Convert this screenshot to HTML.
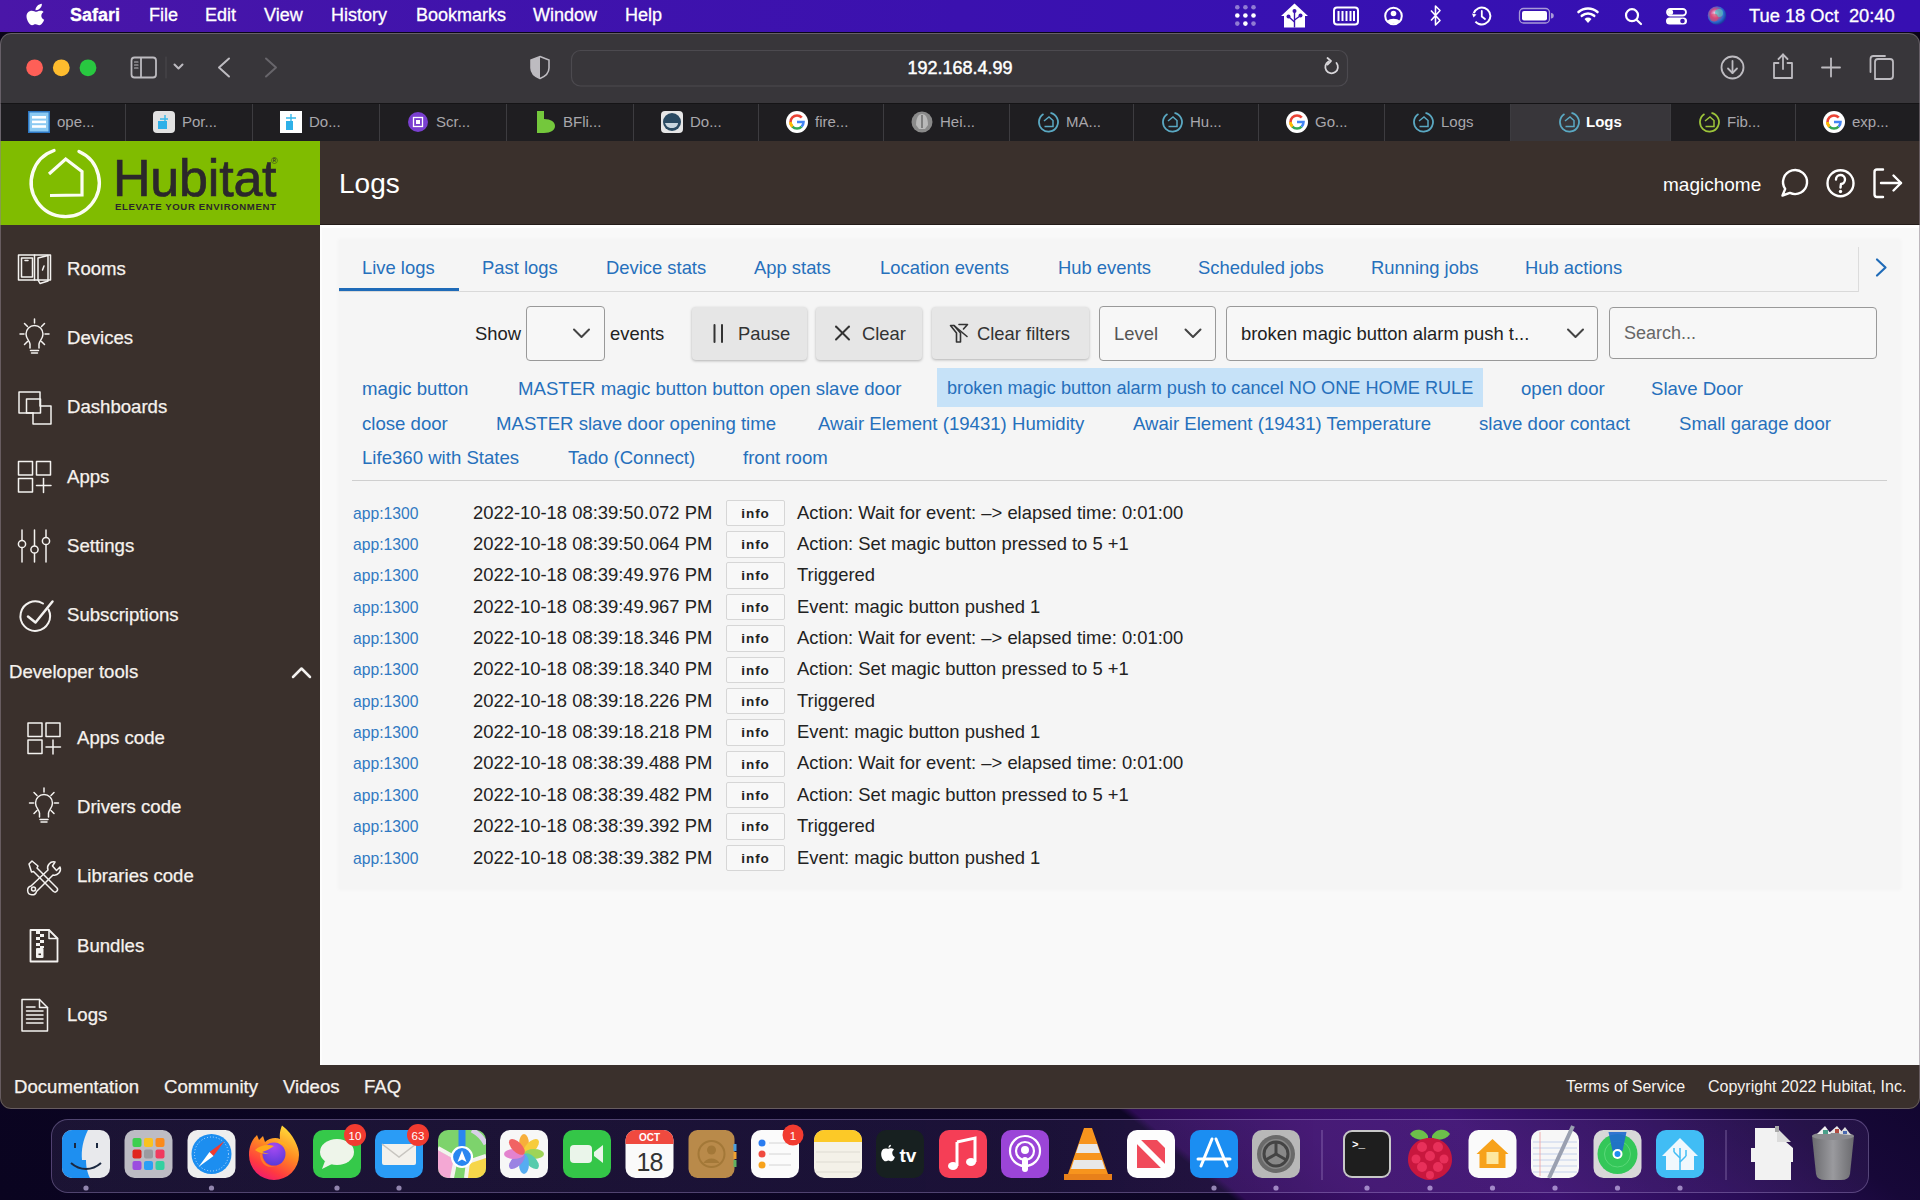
<!DOCTYPE html>
<html><head><meta charset="utf-8">
<style>
*{margin:0;padding:0;box-sizing:border-box}
html,body{width:1920px;height:1200px;overflow:hidden;font-family:"Liberation Sans",sans-serif}
body{position:relative;background:#0a0418}
.a{position:absolute;white-space:nowrap}
#menubar{left:0;top:0;width:1920px;height:32px;background:linear-gradient(90deg,#4a16a8 0%,#4013ac 25%,#3b11af 50%,#3611b2 75%,#370fb2 100%);color:#fff;font-size:18px;-webkit-text-stroke:0.3px #fff}
#menubar .a{top:5px}
#win{left:0;top:33px;width:1920px;height:1076px;border-radius:11px;overflow:hidden;background:#38363a;}
#toolbar{left:0;top:0;width:1920px;height:70px;background:#38363a}
#tabbar{left:0;top:70px;width:1920px;height:38px;background:#1f1e21;border-top:1px solid #151416}
.tab{position:absolute;top:0;height:38px;color:#a9a7ac;font-size:15px;border-left:1px solid #3d3c40}
.tab span{position:absolute;top:9.4px}
.fav{position:absolute;top:7px;width:22px;height:22px}
.tab.act{background:#38363a;color:#fff;font-weight:bold}
.side{color:#f6f2ee;font-size:18.6px;-webkit-text-stroke:0.25px #f6f2ee}
.box{border:1.3px solid #999;border-radius:4px;background:#f7f7f7}
.btn{background:#e6e6e6;border-radius:4px;box-shadow:0 1px 3px rgba(0,0,0,.28)}
.info{width:59px;height:26.5px;border:1.2px solid #d6d6d6;border-radius:2px;background:#f8f8f8;font-size:13.5px;font-weight:bold;letter-spacing:0.9px;text-align:center;line-height:25px;color:#222}
.blue{color:#2670bc}
.blue2{color:#3079c2}
</style></head><body>
<svg width="0" height="0" style="position:absolute"><defs>
<symbol id="i-list" viewBox="0 0 22 22"><rect x="0" y="0" width="22" height="22" fill="#2d78c4"/><rect x="1.5" y="1.5" width="19" height="19" fill="#8ccaf2"/><g fill="#fff"><rect x="4" y="5" width="14" height="2.6"/><rect x="4" y="9.6" width="14" height="2.6"/><rect x="4" y="14.2" width="14" height="2.6"/></g></symbol>
<symbol id="i-port" viewBox="0 0 22 22"><rect x="0" y="0" width="22" height="22" rx="4" fill="#e2e2e2"/><path d="M7,8 L15,8 M12,4 L12,18" stroke="#36b8ea" stroke-width="1.4"/><rect x="5" y="10" width="9" height="8" fill="#2eb0e8"/></symbol>
<symbol id="i-dock1" viewBox="0 0 22 22"><rect x="0" y="0" width="22" height="22" fill="#fff"/><path d="M6,7 L16,7 M11,3 L11,19" stroke="#36b8ea" stroke-width="1.4"/><rect x="6" y="10" width="7" height="9" fill="#2eb0e8"/></symbol>
<symbol id="i-scr" viewBox="0 0 22 22"><circle cx="11" cy="11" r="10" fill="#7a3fd0"/><rect x="6.5" y="6.5" width="9" height="9" fill="none" stroke="#fff" stroke-width="1.3"/><rect x="9" y="9" width="4" height="4" fill="#fff"/></symbol>
<symbol id="i-bfli" viewBox="0 0 22 22"><path d="M3,0 L10,0 L10,8 C17,8 21,11 21,15 C21,19 17,22 10,22 L3,22 Z" fill="#74c83c"/></symbol>
<symbol id="i-dock2" viewBox="0 0 22 22"><rect x="0" y="0" width="22" height="22" rx="4" fill="#e6e6e6"/><circle cx="11" cy="11" r="9" fill="#2a4a62"/><path d="M4,12 L17,12 C17,15 14,17 11,17 C7,17 5,15 4,12Z" fill="#c9d6df"/></symbol>
<symbol id="i-g" viewBox="0 0 22 22"><circle cx="11" cy="11" r="11" fill="#fff"/><path d="M11,4.5 A6.5,6.5 0 0 1 15.6,6.4" stroke="#ea4335" stroke-width="2.6" fill="none"/><path d="M15.8,6.6 L15.6,6.4 M6.4,15.6 A6.5,6.5 0 0 1 4.5,11 A6.5,6.5 0 0 1 11,4.5" stroke="#ea4335" stroke-width="2.6" fill="none"/><path d="M4.5,11 A6.5,6.5 0 0 0 6.4,15.6" stroke="#fbbc05" stroke-width="2.6" fill="none"/><path d="M6.4,15.6 A6.5,6.5 0 0 0 15.6,15.6" stroke="#34a853" stroke-width="2.6" fill="none"/><path d="M15.6,15.6 A6.5,6.5 0 0 0 17.5,11 L11,11" stroke="#4285f4" stroke-width="2.6" fill="none"/><path d="M6.4,15.6 A6.5,6.5 0 0 1 4.5,11" stroke="#fbbc05" stroke-width="2.6" fill="none"/></symbol>
<symbol id="i-helm" viewBox="0 0 22 22"><circle cx="11" cy="11" r="10.5" fill="#8a8a8a"/><path d="M5,14 C5,6 8,3 11,3 C14,3 17,6 17,14 L14,18 L8,18 Z" fill="#b9b9b9"/><path d="M11,4 L11,17" stroke="#6c6c6c" stroke-width="1.5"/></symbol>
<symbol id="i-hub" viewBox="0 0 22 22"><path d="M6.5,3 A9.5,9.5 0 1 0 13.5,1.8" fill="none" stroke="#5aa8c2" stroke-width="1.8"/><path d="M7,10 L12,6 L16,9.5 L16,15.5 L7.5,15.5" fill="none" stroke="#5aa8c2" stroke-width="1.5"/></symbol>
<symbol id="i-hubg" viewBox="0 0 22 22"><path d="M6.5,3 A9.5,9.5 0 1 0 13.5,1.8" fill="none" stroke="#9cc43a" stroke-width="1.8"/><path d="M7,10 L12,6 L16,9.5 L16,15.5 L7.5,15.5" fill="none" stroke="#9cc43a" stroke-width="1.5"/></symbol>
</defs></svg>
<div id="menubar" class="a">
  <svg class="a" style="left:0;top:0" width="1920" height="33" viewBox="0 0 1920 33">
    <g transform="translate(26.5,3.8) scale(1.05,0.93) translate(-24.5,-4.5)"><path d="M37.5,9.3 C38.6,8 39.3,6.3 39.1,4.5 C37.6,4.6 35.8,5.5 34.7,6.8 C33.7,7.9 32.9,9.7 33.1,11.4 C34.8,11.5 36.4,10.6 37.5,9.3Z M39,11.8 C36.6,11.7 35.2,13.1 34,13.1 C32.8,13.1 31.2,11.9 29.5,11.9 C27,12 24.5,14 24.5,18 C24.5,20.4 25.4,23 26.6,24.8 C27.6,26.3 28.5,27.5 29.8,27.5 C31.1,27.4 31.6,26.6 33.2,26.6 C34.8,26.6 35.2,27.5 36.6,27.5 C38,27.4 38.9,26.2 39.8,24.8 C40.9,23.2 41.3,21.7 41.3,21.6 C41.3,21.6 38.6,20.5 38.6,17.4 C38.5,14.8 40.7,13.5 40.8,13.4 C39.5,11.6 37.6,11.8 39,11.8Z" fill="#fff"/></g>
    <g fill="#fff">
      <circle cx="1237.3" cy="7.3" r="2.3" opacity=".45"/><circle cx="1245.4" cy="7.3" r="2.3" opacity=".45"/><circle cx="1253.5" cy="7.3" r="2.3" opacity=".45"/>
      <circle cx="1237.3" cy="15.5" r="2.3"/><circle cx="1245.4" cy="15.5" r="2.3"/><circle cx="1253.5" cy="15.5" r="2.3"/>
      <circle cx="1237.3" cy="23.6" r="2.3" opacity=".45"/><circle cx="1245.4" cy="23.6" r="2.3"/><circle cx="1253.5" cy="23.6" r="2.3" opacity=".45"/>
      <path d="M1294.5,3.5 L1308,16 L1305,16 L1305,27.5 L1284,27.5 L1284,16 L1281,16Z"/>
    </g>
    <g fill="none" stroke="#3d12b0" stroke-width="1.4">
      <line x1="1294.5" y1="12" x2="1294.5" y2="27.5"/>
      <path d="M1294.5,22 L1289,17 M1294.5,20 L1300,16"/>
    </g>
    <g fill="#3d12b0"><circle cx="1294.5" cy="11" r="2"/><circle cx="1288.5" cy="16.5" r="2"/><circle cx="1300.5" cy="15.5" r="2"/></g>
    <g fill="none" stroke="#fff" stroke-width="2">
      <rect x="1334" y="7.5" width="24" height="17" rx="3"/>
      <circle cx="1393.5" cy="16" r="8.3"/>
      <circle cx="1481.8" cy="16" r="8.5" stroke-dasharray="44 10" transform="rotate(200 1481.8 16)"/>
    </g>
    <g stroke="#fff" stroke-width="2"><line x1="1338.5" y1="11" x2="1338.5" y2="21"/><line x1="1342.5" y1="11" x2="1342.5" y2="21"/><line x1="1346.5" y1="11" x2="1346.5" y2="21"/><line x1="1350.5" y1="11" x2="1350.5" y2="21"/><line x1="1354" y1="11" x2="1354" y2="21"/></g>
    <circle cx="1393.5" cy="13.5" r="2.8" fill="#fff"/><path d="M1387.5,21 C1389,18 1398,18 1399.5,21 L1397,23.5 L1390,23.5Z" fill="#fff"/>
    <path d="M1431,10.5 L1440,20.5 L1435.5,25 L1435.5,6 L1440,10.5 L1431,20.5" fill="none" stroke="#fff" stroke-width="1.6" stroke-linejoin="round"/>
    <path d="M1481.8,11 L1481.8,16.5 L1485,19" fill="none" stroke="#fff" stroke-width="1.8" stroke-linecap="round"/>
    <path d="M1472,13.5 L1473.5,17.5 L1476.5,14.5Z" fill="#fff"/>
    <rect x="1519.5" y="8.5" width="30" height="14.5" rx="4" fill="none" stroke="#a99ad8" stroke-width="1.3"/>
    <rect x="1522" y="11" width="25" height="9.5" rx="2" fill="#fff"/>
    <path d="M1551,13 A2.5,2.5 0 0 1 1551,18.5Z" fill="#a99ad8"/>
    <g fill="none" stroke="#fff" stroke-width="2.6" stroke-linecap="round">
      <path d="M1578.5,12 A14.5,14.5 0 0 1 1597.5,12"/>
      <path d="M1581.8,15.8 A9.5,9.5 0 0 1 1594.2,15.8"/>
    </g>
    <path d="M1584.5,19 A5,5 0 0 1 1591.5,19 L1588,23Z" fill="#fff"/>
    <g fill="none" stroke="#fff" stroke-width="2.2" stroke-linecap="round">
      <circle cx="1632" cy="15.2" r="6"/><line x1="1636.5" y1="19.7" x2="1641" y2="24"/>
    </g>
    <g fill="none" stroke="#fff" stroke-width="1.8"><rect x="1667" y="9" width="19" height="6.5" rx="3.25"/></g>
    <rect x="1666" y="17.5" width="21" height="7" rx="3.5" fill="#fff"/>
    <circle cx="1670.5" cy="12.2" r="2.6" fill="#fff"/>
    <circle cx="1682.5" cy="21" r="2.3" fill="#3d12b0"/>
    <defs><radialGradient id="siri" cx="40%" cy="40%" r="60%"><stop offset="0" stop-color="#f0f0ff"/><stop offset=".4" stop-color="#d04a8a"/><stop offset=".75" stop-color="#2a6ad0"/><stop offset="1" stop-color="#1a3aa0"/></radialGradient></defs>
    <circle cx="1717" cy="15.5" r="9.3" fill="url(#siri)"/>
    <circle cx="1719" cy="13" r="4" fill="#45c8c8" opacity=".7"/>
    <circle cx="1714" cy="17.5" r="4" fill="#e04a6a" opacity=".6"/>
  </svg>
  <div class="a" style="left:70px;font-weight:bold">Safari</div>
  <div class="a" style="left:149px">File</div>
  <div class="a" style="left:205px">Edit</div>
  <div class="a" style="left:264px">View</div>
  <div class="a" style="left:331px">History</div>
  <div class="a" style="left:416px">Bookmarks</div>
  <div class="a" style="left:533px">Window</div>
  <div class="a" style="left:625px">Help</div>
  <div class="a" style="left:1749px;font-size:18.3px">Tue 18 Oct&nbsp; 20:40</div>
</div>
  <!--DOCK-->
  <div class="a" style="left:0;top:1100px;width:1920px;height:100px;background:linear-gradient(38deg,#0a0420 0%,#0e0626 60.3%,#2e0c55 60.9%,#3a1068 68%,#3c1270 76%,#2a0d58 85%,#170838 93%,#120630 100%)"></div>
  <div class="a" style="left:51px;top:1119px;width:1818px;height:74px;border-radius:17px;background:linear-gradient(90deg,rgba(60,50,90,.35) 0%,rgba(60,45,100,.3) 55%,rgba(110,60,160,.25) 70%,rgba(80,50,120,.25) 100%);border:1.2px solid rgba(180,160,220,.35)"></div>
  <svg class="a" style="left:0;top:1100px" width="1920" height="100" viewBox="0 1100 1920 100">
    <line x1="1322" y1="1130" x2="1322" y2="1180" stroke="rgba(200,180,230,.45)" stroke-width="1"/>
    <line x1="1726" y1="1130" x2="1726" y2="1180" stroke="rgba(200,180,230,.45)" stroke-width="1"/>
    <g transform="translate(86,1154)"><rect x="-24" y="-24" width="48" height="48" rx="10" fill="#e8e9ec"/><path d="M-14,-24 L2,-24 C-3,-14 -5,-4 -4,6 L0,6 C0,14 2,20 4,24 L-14,24 A10,10 0 0 1 -24,14 L-24,-14 A10,10 0 0 1 -14,-24Z" fill="#1e8ff0"/><path d="M-15,9 C-6,17 6,17 15,9" fill="none" stroke="#1b2840" stroke-width="2"/><rect x="-12" y="-11" width="2" height="5" fill="#1b2840"/><rect x="10" y="-11" width="2" height="5" fill="#1b2840"/></g><g transform="translate(148.5,1154)"><rect x="-24" y="-24" width="48" height="48" rx="10" fill="#bdbcc4"/><g><rect x="-16" y="-16" width="9" height="9" rx="2" fill="#3ccf4e"/><rect x="-4.5" y="-16" width="9" height="9" rx="2" fill="#f9c220"/><rect x="7" y="-16" width="9" height="9" rx="2" fill="#fb8a1b"/><rect x="-16" y="-4.5" width="9" height="9" rx="2" fill="#e0261e"/><rect x="-4.5" y="-4.5" width="9" height="9" rx="2" fill="#9a9aa0"/><rect x="7" y="-4.5" width="9" height="9" rx="2" fill="#f03a5f"/><rect x="-16" y="7" width="9" height="9" rx="2" fill="#9b4de0"/><rect x="-4.5" y="7" width="9" height="9" rx="2" fill="#2a9ff5"/><rect x="7" y="7" width="9" height="9" rx="2" fill="#34d0a0"/></g></g><g transform="translate(211.5,1154)"><rect x="-24" y="-24" width="48" height="48" rx="10" fill="#eeeeee"/><circle cx="0" cy="0" r="20" fill="#1c8ef0"/><circle cx="0" cy="0" r="17" fill="none" stroke="#bfe0ff" stroke-width="1" stroke-dasharray="1 2"/><path d="M13,-13 L2,2 L-2,-2Z" fill="#f03b30"/><path d="M-13,13 L2,2 L-2,-2Z" fill="#fff"/></g><g transform="translate(274,1154)"><defs><linearGradient id="ffg" x1=".8" y1="0" x2=".3" y2="1"><stop offset="0" stop-color="#ffe23a"/><stop offset=".45" stop-color="#ff8a22"/><stop offset=".8" stop-color="#ff3a40"/><stop offset="1" stop-color="#f01a70"/></linearGradient><radialGradient id="ffp" cx=".5" cy=".2" r=".8"><stop offset="0" stop-color="#a64af2"/><stop offset="1" stop-color="#5a3ad8"/></radialGradient></defs><path d="M-25,1 C-25,-9 -21,-15 -17,-19 L-15,-14 L-11,-18 L-9,-12 C-5,-16 2,-17 6,-15 C5,-21 7,-26 8,-28.5 C14,-24 18,-19 21,-13 C24,-7 25,-3 25,1 A25,25 0 0 1 -25,1Z" fill="url(#ffg)"/><circle cx="0" cy="0" r="11.5" fill="url(#ffp)"/><path d="M-19,-4 C-14,-9 -6,-10 0,-8 C-4,-5 -8,-3 -12,-2 C-10,-1 -7,-1 -5,0 C-10,0 -15,-1 -19,-4Z" fill="#ffa81a"/><path d="M-12,-1 C-12,8 -6,13 1,12 C-6,15 -14,10 -14,0Z" fill="#ff7a2a"/><path d="M4,-13 C10,-13 14,-9 15,-5 C12,-9 8,-11 4,-11Z" fill="#ffb020"/></g><g transform="translate(337,1154)"><rect x="-24" y="-24" width="48" height="48" rx="10" fill="#35c94a"/><ellipse cx="0" cy="-2" rx="17" ry="13" fill="#eef5ea"/><path d="M-12,7 L-15,15 L-5,10Z" fill="#eef5ea"/></g><g transform="translate(399,1154)"><rect x="-24" y="-24" width="48" height="48" rx="10" fill="#2a9cf6"/><rect x="-17" y="-10" width="34" height="21" rx="2" fill="#f3f1ec"/><path d="M-17,-10 L0,3 L17,-10" fill="none" stroke="#c8c5c0" stroke-width="1.5"/></g><g transform="translate(462,1154)"><defs><clipPath id="mclip"><rect x="-24" y="-24" width="48" height="48" rx="10"/></clipPath></defs><g clip-path="url(#mclip)"><rect x="-24" y="-24" width="48" height="48" fill="#7dd36c"/><path d="M10,-24 A34,34 0 0 1 24,-10" fill="none" stroke="#d8d0e8" stroke-width="5"/><path d="M-24,-4 L-6,6 L-10,24 L-24,24Z" fill="#f4a8d4"/><path d="M6,8 L24,4 L24,24 L4,24Z" fill="#f6d64a"/><path d="M-24,-6 L-6,4 L-10,24 M-6,4 L6,8 L24,2 M6,8 L4,24" fill="none" stroke="#f4f2ee" stroke-width="4"/><rect x="-3.5" y="-24" width="7" height="26" fill="#2a86f0"/><circle cx="0" cy="3" r="10" fill="#2a86f0" stroke="#fff" stroke-width="2.2"/><path d="M0,-3.5 L4.5,8 L0,5.5 L-4.5,8Z" fill="#fff"/></g></g><g transform="translate(524,1154)"><rect x="-24" y="-24" width="48" height="48" rx="10" fill="#f7f7f7"/><g opacity="0.85"><ellipse cx="0" cy="-10" rx="5" ry="10" fill="#f7a21b"/><ellipse cx="0" cy="-10" rx="5" ry="10" fill="#f7c51b" transform="rotate(45)"/><ellipse cx="0" cy="-10" rx="5" ry="10" fill="#8fcf3c" transform="rotate(90)"/><ellipse cx="0" cy="-10" rx="5" ry="10" fill="#3cc4a0" transform="rotate(135)"/><ellipse cx="0" cy="-10" rx="5" ry="10" fill="#3a9ff0" transform="rotate(180)"/><ellipse cx="0" cy="-10" rx="5" ry="10" fill="#8a6ee0" transform="rotate(225)"/><ellipse cx="0" cy="-10" rx="5" ry="10" fill="#e06ec8" transform="rotate(270)"/><ellipse cx="0" cy="-10" rx="5" ry="10" fill="#f04a4a" transform="rotate(315)"/></g></g><g transform="translate(587,1154)"><rect x="-24" y="-24" width="48" height="48" rx="10" fill="#34c648"/><rect x="-17" y="-9" width="22" height="18" rx="4" fill="#eaf5ea"/><path d="M7,-2 L16,-9 L16,9 L7,2Z" fill="#eaf5ea"/></g><g transform="translate(649.5,1154)"><rect x="-24" y="-24" width="48" height="48" rx="10" fill="#fafafa"/><path d="M-24,-14 A10,10 0 0 1 -14,-24 L14,-24 A10,10 0 0 1 24,-14 L24,-10 L-24,-10Z" fill="#f04a3f"/><text x="0" y="-13.5" text-anchor="middle" font-family="Liberation Sans" font-weight="bold" font-size="10" fill="#fff">OCT</text><text x="0" y="17" text-anchor="middle" font-family="Liberation Sans" font-size="25" fill="#333" letter-spacing="-1">18</text></g><g transform="translate(712.5,1154)"><rect x="-24" y="-24" width="46" height="48" rx="9" fill="#b98a4a"/><rect x="21" y="-10" width="3" height="7" fill="#4aa0e0"/><rect x="21" y="-2" width="3" height="7" fill="#f0a030"/><rect x="21" y="6" width="3" height="7" fill="#60b060"/><circle cx="-1" cy="0" r="13" fill="none" stroke="#a37838" stroke-width="2"/><circle cx="-1" cy="-4" r="4.5" fill="#a37838"/><path d="M-9,9 C-6,3 4,3 7,9Z" fill="#a37838"/></g><g transform="translate(775,1154)"><rect x="-24" y="-24" width="48" height="48" rx="10" fill="#fbfbfb"/><circle cx="-13" cy="-11" r="3.5" fill="#2a7cf0"/><circle cx="-13" cy="0" r="3.5" fill="#f04a3f"/><circle cx="-13" cy="11" r="3.5" fill="#f7a21b"/><g stroke="#d4d4d4" stroke-width="1"><line x1="-6" y1="-11" x2="16" y2="-11"/><line x1="-6" y1="0" x2="16" y2="0"/><line x1="-6" y1="11" x2="16" y2="11"/></g></g><g transform="translate(838,1154)"><rect x="-24" y="-24" width="48" height="48" rx="10" fill="#f4f1e8"/><path d="M-24,-14 A10,10 0 0 1 -14,-24 L14,-24 A10,10 0 0 1 24,-14 L24,-12 L-24,-12Z" fill="#fcc927"/><g stroke="#dedbd2" stroke-width="1"><line x1="-22" y1="-2" x2="22" y2="-2"/><line x1="-22" y1="8" x2="22" y2="8"/><line x1="-22" y1="18" x2="22" y2="18"/></g></g><g transform="translate(900,1154)"><rect x="-24" y="-24" width="48" height="48" rx="10" fill="#172020"/><g transform="translate(-12,0.5) scale(0.85) translate(10,-1)"><path d="M-13,-6 C-17,-6 -18,-2 -18,1 C-18,5 -15,9 -13,9 C-11.5,9 -11,8 -9.5,8 C-8,8 -7.5,9 -6,9 C-4,9 -2,5 -2,4 C-4,3 -5,1 -5,-1 C-5,-3 -4,-4 -3,-5 C-4,-6.5 -6,-6.5 -7,-6.5 C-8.5,-6.5 -9,-5.8 -10,-5.8 C-11,-5.8 -11.5,-6 -13,-6Z M-9.5,-7 C-9.5,-9 -8,-10.5 -6.5,-10.5 C-6.5,-8.5 -8,-7 -9.5,-7Z" fill="#fff"/></g><text x="8" y="7.5" text-anchor="middle" font-family="Liberation Sans" font-weight="bold" font-size="19" fill="#fff">tv</text></g><g transform="translate(963,1154)"><rect x="-24" y="-24" width="48" height="48" rx="10" fill="#f53e56"/><path d="M-6,-12 L12,-16 L12,8" fill="none" stroke="#fff" stroke-width="3"/><line x1="-6" y1="-12" x2="-6" y2="12" stroke="#fff" stroke-width="3"/><ellipse cx="-10" cy="12" rx="5" ry="4" fill="#fff"/><ellipse cx="8" cy="8" rx="5" ry="4" fill="#fff"/></g><g transform="translate(1025,1154)"><rect x="-24" y="-24" width="48" height="48" rx="10" fill="#9b45d8"/><circle cx="0" cy="-3" r="15" fill="none" stroke="#fff" stroke-width="2.2"/><circle cx="0" cy="-3" r="9" fill="none" stroke="#fff" stroke-width="2.2"/><circle cx="0" cy="-4" r="4" fill="#fff"/><rect x="-3" y="3" width="6" height="15" rx="3" fill="#fff"/></g><g transform="translate(1088,1154)"><path d="M-4,-26 L4,-26 L20,20 L24,26 L-24,26 L-20,20Z" fill="#f7941d"/><path d="M-9,-10 L9,-10 L12,-1 L-12,-1Z" fill="#e8e8e8"/><path d="M-14,6 L14,6 L17,15 L-17,15Z" fill="#e8e8e8"/><path d="M-24,20 L24,20 L24,26 L-24,26Z" fill="#e8801a"/></g><g transform="translate(1151,1154)"><rect x="-24" y="-24" width="48" height="48" rx="10" fill="#fdfdfd"/><path d="M-14,-14 L6,-14 L14,-6 L14,14 L-6,14 L-14,6Z" fill="#f04a5a"/><path d="M-14,-14 L14,14" stroke="#fff" stroke-width="6"/><path d="M-14,-8 L-14,14 L8,14Z" fill="#f04a5a"/></g><g transform="translate(1214,1154)"><rect x="-24" y="-24" width="48" height="48" rx="10" fill="#1b8ef2"/><g stroke="#fff" stroke-width="3" stroke-linecap="round"><line x1="-2" y1="-15" x2="-13" y2="12"/><line x1="2" y1="-15" x2="13" y2="12"/><line x1="-16" y1="5" x2="16" y2="5"/></g></g><g transform="translate(1276,1154)"><rect x="-24" y="-24" width="48" height="48" rx="10" fill="#b8b8b8"/><circle cx="0" cy="0" r="19" fill="#6a6a6a"/><circle cx="0" cy="0" r="15" fill="#888"/><circle cx="0" cy="0" r="12" fill="none" stroke="#444" stroke-width="3"/><g stroke="#444" stroke-width="3"><line x1="0" y1="0" x2="0" y2="-12"/><line x1="0" y1="0" x2="10.4" y2="6"/><line x1="0" y1="0" x2="-10.4" y2="6"/></g></g><g transform="translate(1367,1154)"><rect x="-24" y="-24" width="48" height="48" rx="9" fill="#c8c8c8"/><rect x="-22" y="-22" width="44" height="44" rx="7" fill="#1e1e1e"/><text x="-15" y="-6" font-family="Liberation Mono" font-weight="bold" font-size="11" fill="#fff">&gt;_</text></g><g transform="translate(1430,1154)"><path d="M-2,-18 C-6,-26 -16,-26 -20,-20 C-16,-14 -8,-13 -2,-16Z" fill="#6cc04a"/><path d="M2,-18 C6,-26 16,-26 20,-20 C16,-14 8,-13 2,-16Z" fill="#6cc04a"/><path d="M0,-16 C-14,-16 -22,-6 -22,6 C-22,18 -10,26 0,26 C10,26 22,18 22,6 C22,-6 14,-16 0,-16Z" fill="#c8173e"/><g fill="#e8305a"><circle cx="-8" cy="-7" r="5"/><circle cx="8" cy="-7" r="5"/><circle cx="0" cy="2" r="5"/><circle cx="-14" cy="5" r="4.5"/><circle cx="14" cy="5" r="4.5"/><circle cx="-8" cy="13" r="5"/><circle cx="8" cy="13" r="5"/><circle cx="0" cy="21" r="4"/></g></g><g transform="translate(1492.5,1154)"><rect x="-24" y="-24" width="48" height="48" rx="10" fill="#fafafa"/><path d="M-16,0 L0,-15 L16,0 L13,0 L13,14 L-13,14 L-13,0Z" fill="#f7a21b"/><rect x="-6" y="-2" width="12" height="12" fill="#fde7a0"/></g><g transform="translate(1555,1154)"><rect x="-24" y="-24" width="48" height="48" rx="10" fill="#f7f7f7"/><g stroke="#b8c8e8" stroke-width="0.8"><line x1="-22" y1="-12" x2="22" y2="-12"/><line x1="-22" y1="-6" x2="22" y2="-6"/><line x1="-22" y1="0" x2="22" y2="0"/><line x1="-22" y1="6" x2="22" y2="6"/><line x1="-22" y1="12" x2="22" y2="12"/><line x1="-22" y1="18" x2="22" y2="18"/></g><line x1="-15" y1="-22" x2="-15" y2="22" stroke="#f0a0a0" stroke-width="0.8"/><line x1="18" y1="-28" x2="-6" y2="24" stroke="#9aa0b0" stroke-width="4"/></g><g transform="translate(1617.5,1154)"><rect x="-24" y="-24" width="48" height="48" rx="10" fill="#d8d8d8"/><circle cx="0" cy="0" r="20" fill="#34c759"/><circle cx="0" cy="0" r="13" fill="none" stroke="#5ad878" stroke-width="1"/><path d="M-9,-22 L9,-22 L5,-3 L-5,-3Z" fill="#1e6ad0" opacity="0.9"/><circle cx="0" cy="0" r="5" fill="#fff"/><circle cx="0" cy="0" r="3" fill="#1e8ef0"/></g><g transform="translate(1680,1154)"><rect x="-24" y="-24" width="48" height="48" rx="10" fill="#41bdf5"/><path d="M-18,2 L0,-16 L18,2 L14,2 L14,16 L-14,16 L-14,2Z" fill="#f0f8fd"/><g stroke="#41bdf5" stroke-width="1.5" fill="none"><line x1="0" y1="-6" x2="0" y2="16"/><path d="M0,4 L-6,-2 M0,8 L6,2 M-6,-2 L-6,-6 M6,2 L6,-4"/></g></g><g transform="translate(1771,1154)"><path d="M-16,-26 L6,-26 L6,-20 L22,-6 L22,8 L20,8 L20,26 L-16,26 L-16,8 L-20,8 L-20,-6 L-16,-6Z" fill="#f2f2f2"/><path d="M6,-26 L6,-12 L20,-12" fill="#dcdcdc"/><rect x="4" y="-28" width="4" height="6" fill="#aaa"/></g><g transform="translate(1833,1154)"><defs><linearGradient id="trg" x1="0" y1="0" x2="1" y2="0"><stop offset="0" stop-color="#6a6a6e"/><stop offset=".5" stop-color="#9a9a9e"/><stop offset="1" stop-color="#6a6a6e"/></linearGradient></defs><path d="M-21,-18 L21,-18 L17,20 Q16,26 8,26 L-8,26 Q-16,26 -17,20Z" fill="url(#trg)"/><ellipse cx="0" cy="-18" rx="21" ry="4" fill="#8a8a8e"/><g><path d="M-16,-20 L-8,-28 L-2,-20Z" fill="#f0f0f0"/><path d="M-4,-21 L4,-28 L10,-21Z" fill="#e8e8e8"/><path d="M6,-20 L12,-27 L18,-19Z" fill="#dcdcdc"/><rect x="-10" y="-24" width="5" height="4" fill="#4aa08a"/><rect x="2" y="-25" width="4" height="4" fill="#b04a40"/><rect x="10" y="-23" width="4" height="3" fill="#4a6ab0"/></g></g>
    <circle cx="86" cy="1188" r="2.6" fill="rgba(225,210,255,0.6)"/><circle cx="211.5" cy="1188" r="2.6" fill="rgba(225,210,255,0.6)"/><circle cx="337" cy="1188" r="2.6" fill="rgba(225,210,255,0.6)"/><circle cx="399" cy="1188" r="2.6" fill="rgba(225,210,255,0.6)"/><circle cx="1214" cy="1188" r="2.6" fill="rgba(225,210,255,0.6)"/><circle cx="1276" cy="1188" r="2.6" fill="rgba(225,210,255,0.6)"/><circle cx="1367" cy="1188" r="2.6" fill="rgba(225,210,255,0.6)"/><circle cx="1430" cy="1188" r="2.6" fill="rgba(225,210,255,0.6)"/><circle cx="1492.5" cy="1188" r="2.6" fill="rgba(225,210,255,0.6)"/><circle cx="1555" cy="1188" r="2.6" fill="rgba(225,210,255,0.6)"/><circle cx="1617.5" cy="1188" r="2.6" fill="rgba(225,210,255,0.6)"/><circle cx="1680" cy="1188" r="2.6" fill="rgba(225,210,255,0.6)"/>
    <g font-family="Liberation Sans" font-size="11.5" fill="#fff" text-anchor="middle"><circle cx="355" cy="1135" r="11" fill="#f23b30"/><text x="355" y="1139.5">10</text><circle cx="418" cy="1135" r="11" fill="#f23b30"/><text x="418" y="1139.5">63</text><circle cx="793" cy="1135" r="10.5" fill="#f23b30"/><text x="793" y="1139.5">1</text></g>
  </svg>
<div id="win" class="a">
  <div id="toolbar" class="a">
    <svg class="a" style="left:0;top:0" width="1920" height="70" viewBox="0 33 1920 70">
      <circle cx="34.6" cy="67.8" r="8.4" fill="#fe5f57"/>
      <circle cx="61.3" cy="67.8" r="8.4" fill="#febc2e"/>
      <circle cx="88" cy="67.8" r="8.4" fill="#28c840"/>
      <g fill="none" stroke="#bdbbc0" stroke-width="1.8" stroke-linecap="round" stroke-linejoin="round">
        <rect x="131.5" y="57.5" width="24.5" height="20" rx="3"/>
        <line x1="141" y1="58" x2="141" y2="77"/>
        <line x1="134.5" y1="62" x2="138" y2="62" stroke-width="1.2"/>
        <line x1="134.5" y1="65" x2="138" y2="65" stroke-width="1.2"/>
        <line x1="134.5" y1="68" x2="138" y2="68" stroke-width="1.2"/>
        <line x1="166" y1="57" x2="166" y2="78" stroke="#4a484d" stroke-width="1"/>
        <polyline points="174.5,64.5 178.5,68.5 182.5,64.5" stroke-width="2"/>
        <polyline points="229,58.5 219,67.5 229,76.5" stroke-width="2"/>
        <polyline points="266,58.5 276,67.5 266,76.5" stroke="#67656a" stroke-width="2"/>
      </g>
      <path d="M540,56.5 L549,60 L549,68 C549,73 545,76.5 540,78.5 C535,76.5 531,73 531,68 L531,60 Z" fill="none" stroke="#bdbbc0" stroke-width="1.6"/>
      <path d="M540,56.5 L531,60 L531,68 C531,73 535,76.5 540,78.5 Z" fill="#bdbbc0"/>
      <rect x="571.5" y="50.5" width="776" height="35.5" rx="9" fill="#38363a" stroke="#4c4a4f" stroke-width="1.2"/>
      <g fill="none" stroke="#d8d6da" stroke-width="1.8" stroke-linecap="round" stroke-linejoin="round">
        <path d="M1336.5,63 A6.3,6.3 0 1 1 1328.5,61.5"/>
        <polyline points="1327.5,58 1331,61 1327.5,64.5"/>
      </g>
      <g fill="none" stroke="#bdbbc0" stroke-width="1.8" stroke-linecap="round" stroke-linejoin="round">
        <circle cx="1732.5" cy="67.5" r="11"/>
        <line x1="1732.5" y1="61" x2="1732.5" y2="73"/>
        <polyline points="1728,68.5 1732.5,73 1737,68.5"/>
        <path d="M1778.5,63 L1774,63 L1774,78 L1792,78 L1792,63 L1787.5,63"/>
        <line x1="1783" y1="54.5" x2="1783" y2="69"/>
        <polyline points="1778.5,59 1783,54.5 1787.5,59"/>
        <line x1="1822" y1="67.5" x2="1840" y2="67.5"/>
        <line x1="1831" y1="58.5" x2="1831" y2="76.5"/>
        <path d="M1875,79 L1875,62 A3,3 0 0 1 1878,59 L1890,59 A3,3 0 0 1 1893,62 L1893,76 A3,3 0 0 1 1890,79 Z" />
        <path d="M1870.5,72 L1870.5,59 A3,3 0 0 1 1873.5,56 L1885,56"/>
      </g>
    </svg>
    <div class="a" style="left:0;width:1920px;top:25px;text-align:center;color:#fff;font-size:18px;-webkit-text-stroke:0.45px #fff">192.168.4.99</div>
  </div>
  <div id="tabbar" class="a">
<div class="tab" style="left:0px;width:125px"><svg class="fav" style="left:27px" viewBox="0 0 22 22"><use href="#i-list"/></svg><span style="left:56px">ope...</span></div>
<div class="tab" style="left:125px;width:127px"><svg class="fav" style="left:27px" viewBox="0 0 22 22"><use href="#i-port"/></svg><span style="left:56px">Por...</span></div>
<div class="tab" style="left:252px;width:127px"><svg class="fav" style="left:27px" viewBox="0 0 22 22"><use href="#i-dock1"/></svg><span style="left:56px">Do...</span></div>
<div class="tab" style="left:379px;width:127px"><svg class="fav" style="left:27px" viewBox="0 0 22 22"><use href="#i-scr"/></svg><span style="left:56px">Scr...</span></div>
<div class="tab" style="left:506px;width:127px"><svg class="fav" style="left:27px" viewBox="0 0 22 22"><use href="#i-bfli"/></svg><span style="left:56px">BFli...</span></div>
<div class="tab" style="left:633px;width:125px"><svg class="fav" style="left:27px" viewBox="0 0 22 22"><use href="#i-dock2"/></svg><span style="left:56px">Do...</span></div>
<div class="tab" style="left:758px;width:125px"><svg class="fav" style="left:27px" viewBox="0 0 22 22"><use href="#i-g"/></svg><span style="left:56px">fire...</span></div>
<div class="tab" style="left:883px;width:126px"><svg class="fav" style="left:27px" viewBox="0 0 22 22"><use href="#i-helm"/></svg><span style="left:56px">Hei...</span></div>
<div class="tab" style="left:1009px;width:124px"><svg class="fav" style="left:27px" viewBox="0 0 22 22"><use href="#i-hub"/></svg><span style="left:56px">MA...</span></div>
<div class="tab" style="left:1133px;width:125px"><svg class="fav" style="left:27px" viewBox="0 0 22 22"><use href="#i-hub"/></svg><span style="left:56px">Hu...</span></div>
<div class="tab" style="left:1258px;width:126px"><svg class="fav" style="left:27px" viewBox="0 0 22 22"><use href="#i-g"/></svg><span style="left:56px">Go...</span></div>
<div class="tab" style="left:1384px;width:126px"><svg class="fav" style="left:27px" viewBox="0 0 22 22"><use href="#i-hub"/></svg><span style="left:56px">Logs</span></div>
<div class="tab act" style="left:1510px;width:160px"><svg class="fav" style="left:47px" viewBox="0 0 22 22"><use href="#i-hub"/></svg><span style="left:75px">Logs</span></div>
<div class="tab" style="left:1670px;width:125px"><svg class="fav" style="left:27px" viewBox="0 0 22 22"><use href="#i-hubg"/></svg><span style="left:56px">Fib...</span></div>
<div class="tab" style="left:1795px;width:125px"><svg class="fav" style="left:27px" viewBox="0 0 22 22"><use href="#i-g"/></svg><span style="left:56px">exp...</span></div>
</div>
  <div class="a" style="left:0;top:-33px;width:1920px;height:1200px">
  <div id="page" class="a" style="left:0;top:141px;width:1920px;height:968px;background:#3a302c"></div>
  <div id="logo" class="a" style="left:0;top:141px;width:320px;height:84px;background:#80bc00"></div>
  <div id="main" class="a" style="left:320px;top:225px;width:1600px;height:840px;background:#f9f9f9"></div>
  <div class="a" style="left:339px;top:240px;width:1561px;height:649px;background:#f5f5f5;box-shadow:0 0 4px 1px rgba(0,0,0,.025)"></div>
  <div class="a" style="left:320px;top:223.5px;width:1600px;height:1.5px;background:#241c19"></div>
  <div class="a" style="left:320px;top:225px;width:1600px;height:3px;background:#fff"></div>
  <div class="a" style="left:320px;top:225px;width:2px;height:840px;background:#fdfdfd"></div>
  <!--HEADER-->
  <svg class="a" style="left:0;top:141px" width="320" height="84" viewBox="0 141 320 84">
    <path d="M54,150.5 A34,34 0 1 0 79,151.5" fill="none" stroke="#fbfdf2" stroke-width="3.4" stroke-linecap="round"/>
    <path d="M49,174 L65.7,159 L82,171.5 L82,195 L50,195.5" fill="none" stroke="#fbfdf2" stroke-width="3.2" stroke-linejoin="miter"/>
  </svg>
  <div class="a" style="left:113px;top:148px;font-size:52px;color:#2b272b;letter-spacing:-0.2px;-webkit-text-stroke:0.7px #2b272b">Hubitat</div>
  <div class="a" style="left:271px;top:156px;font-size:9px;color:#2b272b">&#174;</div>
  <div class="a" style="left:115px;top:201px;font-size:9.6px;font-weight:bold;color:#2b272b;letter-spacing:0.62px">ELEVATE YOUR ENVIRONMENT</div>
  <div class="a" style="left:339px;top:168px;font-size:28px;color:#fff">Logs</div>
  <div class="a" style="left:1663px;top:174px;font-size:19px;color:#fff">magichome</div>
  <svg class="a" style="left:1770px;top:160px" width="150" height="50" viewBox="1770 160 150 50">
    <g fill="none" stroke="#fff" stroke-width="2.4" stroke-linecap="round" stroke-linejoin="round">
      <path d="M1782.5,195.5 L1785.2,188.9 A12,12 0 1 1 1789.9,192.9 Z"/>
      <circle cx="1840.5" cy="183.2" r="13"/>
      <path d="M1836,179.5 A4.5,4.5 0 1 1 1841,184 L1840.5,187.5"/>
      <path d="M1883,169.5 L1877,169.5 Q1874.5,169.5 1874.5,172 L1874.5,194.5 Q1874.5,197 1877,197 L1883,197"/>
      <line x1="1881" y1="183" x2="1901" y2="183"/>
      <polyline points="1893.5,175.5 1901,183 1893.5,190.5"/>
    </g>
    <circle cx="1840.5" cy="191.5" r="1.7" fill="#fff"/>
  </svg>
  <!--SIDEBAR-->
  <div class="a side" style="left:67px;top:258px">Rooms</div>
  <div class="a side" style="left:67px;top:327px">Devices</div>
  <div class="a side" style="left:67px;top:396px">Dashboards</div>
  <div class="a side" style="left:67px;top:466px">Apps</div>
  <div class="a side" style="left:67px;top:535px">Settings</div>
  <div class="a side" style="left:67px;top:604px">Subscriptions</div>
  <div class="a side" style="left:9px;top:661px">Developer tools</div>
  <div class="a side" style="left:77px;top:727px">Apps code</div>
  <div class="a side" style="left:77px;top:796px">Drivers code</div>
  <div class="a side" style="left:77px;top:865px">Libraries code</div>
  <div class="a side" style="left:77px;top:935px">Bundles</div>
  <div class="a side" style="left:67px;top:1004px">Logs</div>
  <div class="a side" style="left:14px;top:1076px">Documentation</div>
  <div class="a side" style="left:164px;top:1076px">Community</div>
  <div class="a side" style="left:283px;top:1076px">Videos</div>
  <div class="a side" style="left:364px;top:1076px">FAQ</div>
  <div class="a" style="left:1566px;top:1078px;font-size:16px;color:#f6f2ee">Terms of Service</div>
  <div class="a" style="left:1708px;top:1078px;font-size:16px;color:#f6f2ee">Copyright 2022 Hubitat, Inc.</div>
  <svg class="a" style="left:0;top:225px" width="320" height="840" viewBox="0 225 320 840">
    <g fill="none" stroke="#f4f2f0" stroke-width="1.5" stroke-linejoin="round" stroke-linecap="round">
      <!-- rooms -->
      <rect x="18.5" y="255" width="32" height="25"/>
      <rect x="21.5" y="258" width="11" height="19"/>
      <line x1="34.5" y1="255" x2="34.5" y2="280"/>
      <path d="M38,258 L48,255.5 L48,281 L40,283.5 L38,280 Z"/>
      <line x1="25" y1="260.5" x2="28" y2="260.5"/>
      <line x1="44" y1="266" x2="42.5" y2="270"/>
      <!-- devices bulb -->
      <path d="M30,348 L30,344 C30,341 26,339 26,334 A8.5,8.5 0 0 1 43,334 C43,339 39,341 39,344 L39,348"/>
      <line x1="30.5" y1="350.5" x2="38.5" y2="350.5"/>
      <line x1="31.5" y1="353" x2="37.5" y2="353"/>
      <line x1="34.5" y1="319" x2="34.5" y2="323"/>
      <line x1="20" y1="334" x2="24" y2="334"/>
      <line x1="45" y1="334" x2="49" y2="334"/>
      <line x1="24.5" y1="323.5" x2="27.5" y2="326.5"/>
      <line x1="44.5" y1="323.5" x2="41.5" y2="326.5"/>
      <line x1="24.5" y1="344.5" x2="27.5" y2="341.5"/>
      <line x1="44.5" y1="344.5" x2="41.5" y2="341.5"/>
      <!-- dashboards -->
      <path d="M33,413 L19,413 L19,392 L40,392 L40,406"/>
      <rect x="26.5" y="399" width="14" height="14"/>
      <path d="M40.5,406 L51,406 L51,424 L33,424 L33,413"/>
      <!-- apps -->
      <rect x="18.5" y="461.5" width="14" height="13.5"/>
      <rect x="36.5" y="461.5" width="14" height="13.5"/>
      <rect x="18.5" y="478.5" width="14" height="13.5"/>
      <line x1="36.5" y1="485.5" x2="51" y2="485.5"/>
      <line x1="43.5" y1="478.5" x2="43.5" y2="492.5"/>
      <!-- settings -->
      <line x1="22" y1="530" x2="22" y2="562"/>
      <line x1="34.5" y1="530" x2="34.5" y2="562"/>
      <line x1="46" y1="530" x2="46" y2="562"/>
      <circle cx="22" cy="544" r="3.6" fill="#3a302c"/>
      <circle cx="34.5" cy="549.5" r="3.6" fill="#3a302c"/>
      <circle cx="46" cy="541" r="3.6" fill="#3a302c"/>
      <!-- subscriptions -->
      <path d="M48.5,609.5 A14.8,14.8 0 1 1 43,603.5" stroke-width="2"/>
      <polyline points="28,616.5 35.5,622.5 52.5,601.5" stroke-width="2.5"/>
      <!-- dev chevron -->
      <polyline points="293,677 301.5,668.5 310,677" stroke-width="2.5"/>
      <!-- apps code -->
      <rect x="28" y="723" width="14" height="13.5"/>
      <rect x="46" y="723" width="14" height="13.5"/>
      <rect x="28" y="740" width="14" height="13.5"/>
      <line x1="46" y1="747" x2="60.5" y2="747"/>
      <line x1="53" y1="740" x2="53" y2="754"/>
      <!-- drivers code bulb -->
      <path d="M39.5,817 L39.5,813 C39.5,810 35.5,808 35.5,803 A8.5,8.5 0 0 1 52.5,803 C52.5,808 48.5,810 48.5,813 L48.5,817"/>
      <line x1="40" y1="819.5" x2="48" y2="819.5"/>
      <line x1="41" y1="822" x2="47" y2="822"/>
      <line x1="44" y1="788" x2="44" y2="792"/>
      <line x1="29.5" y1="803" x2="33.5" y2="803"/>
      <line x1="54.5" y1="803" x2="58.5" y2="803"/>
      <line x1="34" y1="792.5" x2="37" y2="795.5"/>
      <line x1="54" y1="792.5" x2="51" y2="795.5"/>
      <line x1="34" y1="813.5" x2="37" y2="810.5"/>
      <line x1="54" y1="813.5" x2="51" y2="810.5"/>
      <!-- libraries code tools -->
      <path d="M29,864 L32,861 L38,866 L37,868 L57,888 A2.5,2.5 0 0 1 53.5,891.5 L33.5,871.5 L31.5,872 Z"/>
      <path d="M55,862 A6,6 0 0 0 48,870 L31,886 A4.5,4.5 0 1 0 36.5,891.5 L53,875 A6,6 0 0 0 60,867 L56.5,870.5 L52.5,866 Z"/>
      <circle cx="33.5" cy="889" r="2"/>
      <!-- bundles -->
      <path d="M30.5,930 L49,930 L57.5,938.5 L57.5,961.5 L30.5,961.5 Z" stroke-width="1.8"/>
      <path d="M49,930 L49,938.5 L57.5,938.5" stroke-width="1.5"/>
      <g fill="#f4f2f0" stroke="none"><rect x="36" y="931" width="4" height="3"/><rect x="40" y="934" width="4" height="3"/><rect x="36" y="937" width="4" height="3"/><rect x="40" y="940" width="4" height="3"/><rect x="36" y="943" width="4" height="3"/><rect x="40" y="946" width="4" height="2"/><rect x="36" y="948" width="7.5" height="10" rx="1"/></g><rect x="38.5" y="953.5" width="2.5" height="1.6" fill="#3a302c" stroke="none"/>
      <!-- logs -->
      <path d="M22,999.5 L39.5,999.5 L47.5,1007.5 L47.5,1031 L22,1031 Z"/>
      <path d="M39.5,999.5 L39.5,1007.5 L47.5,1007.5"/>
      <line x1="26.5" y1="1007" x2="35" y2="1007"/>
      <line x1="26.5" y1="1011" x2="43" y2="1011"/>
      <line x1="26.5" y1="1015" x2="43" y2="1015"/>
      <line x1="26.5" y1="1019" x2="43" y2="1019"/>
      <line x1="26.5" y1="1023" x2="43" y2="1023"/>
    </g>
  </svg>
  <!--CONTENT-->
  <div class="a blue" style="left:362px;top:257.2px;font-size:18.4px">Live logs</div>
  <div class="a blue" style="left:482px;top:257.2px;font-size:18.4px">Past logs</div>
  <div class="a blue" style="left:606px;top:257.2px;font-size:18.4px">Device stats</div>
  <div class="a blue" style="left:754px;top:257.2px;font-size:18.4px">App stats</div>
  <div class="a blue" style="left:880px;top:257.2px;font-size:18.4px">Location events</div>
  <div class="a blue" style="left:1058px;top:257.2px;font-size:18.4px">Hub events</div>
  <div class="a blue" style="left:1198px;top:257.2px;font-size:18.4px">Scheduled jobs</div>
  <div class="a blue" style="left:1371px;top:257.2px;font-size:18.4px">Running jobs</div>
  <div class="a blue" style="left:1525px;top:257.2px;font-size:18.4px">Hub actions</div>
  <div class="a" style="left:339px;top:291px;width:1519px;height:1px;background:#d9d9d9"></div>
  <div class="a" style="left:339px;top:288px;width:120px;height:3px;background:#1f6bb8"></div>
  <div class="a" style="left:1858px;top:247px;width:1px;height:45px;background:#dcdcdc"></div>
  <svg class="a" style="left:1870px;top:255px" width="24" height="26" viewBox="1870 255 24 26"><polyline points="1877,259.5 1885.5,267.5 1877,275.5" fill="none" stroke="#1f6bb8" stroke-width="2.2" stroke-linecap="round" stroke-linejoin="round"/></svg>
  <div class="a" style="left:475px;top:322.8px;font-size:18.4px;color:#222">Show</div>
  <div class="a box" style="left:526px;top:306px;width:79px;height:55px"></div>
  <div class="a" style="left:610px;top:322.8px;font-size:18.4px;color:#222">events</div>
  <div class="a btn" style="left:692px;top:307px;width:115px;height:53px"></div>
  <div class="a btn" style="left:816px;top:307px;width:106px;height:53px"></div>
  <div class="a btn" style="left:932px;top:307px;width:157px;height:52px"></div>
  <div class="a" style="left:738px;top:322.8px;font-size:18.4px;color:#333">Pause</div>
  <div class="a" style="left:862px;top:322.8px;font-size:18.4px;color:#333">Clear</div>
  <div class="a" style="left:977px;top:322.8px;font-size:18.4px;color:#333">Clear filters</div>
  <div class="a box" style="left:1099px;top:306px;width:117px;height:55px"></div>
  <div class="a" style="left:1114px;top:322.8px;font-size:18.4px;color:#555">Level</div>
  <div class="a box" style="left:1226px;top:306px;width:372px;height:55px"></div>
  <div class="a" style="left:1241px;top:322.8px;font-size:18.4px;color:#222">broken magic button alarm push t...</div>
  <div class="a box" style="left:1609px;top:307px;width:268px;height:52px"></div>
  <div class="a" style="left:1624px;top:322.8px;font-size:18px;color:#666">Search...</div>
  <svg class="a" style="left:520px;top:300px" width="1100" height="70" viewBox="520 300 1100 70">
    <g fill="none" stroke="#333" stroke-width="2" stroke-linecap="round" stroke-linejoin="round">
      <polyline points="574,329.5 581.5,337 589,329.5" stroke="#444"/>
      <polyline points="1185.5,329.5 1193,337 1200.5,329.5" stroke="#444"/>
      <polyline points="1568,329.5 1575.5,337 1583,329.5" stroke="#444"/>
      <line x1="714.5" y1="325" x2="714.5" y2="342"/>
      <line x1="722" y1="325" x2="722" y2="342"/>
      <line x1="836" y1="326.5" x2="849" y2="339.5"/>
      <line x1="849" y1="326.5" x2="836" y2="339.5"/>
      <path d="M950.5,325.5 L954,325.5 L960.5,333 L960.5,342 L956.5,342 L956.5,333 Z" stroke-width="1.6"/><line x1="954" y1="325.5" x2="967" y2="336.5" stroke-width="1.6"/><path d="M959,324.5 L967.5,324.5 L963.5,329" stroke-width="1.6"/>
    </g>
  </svg>
  <div class="a" style="left:937px;top:368px;width:546px;height:39px;background:#c6e2f8"></div>
  <div class="a blue" style="left:362px;top:378.0px;font-size:18.6px">magic button</div>
  <div class="a blue" style="left:518px;top:378.0px;font-size:18.6px">MASTER magic button button open slave door</div>
  <div class="a blue" style="left:947px;top:378.0px;font-size:18.15px">broken magic button alarm push to cancel NO ONE HOME RULE</div>
  <div class="a blue" style="left:1521px;top:378.0px;font-size:18.6px">open door</div>
  <div class="a blue" style="left:1651px;top:378.0px;font-size:18.6px">Slave Door</div>
  <div class="a blue" style="left:362px;top:412.8px;font-size:18.6px">close door</div>
  <div class="a blue" style="left:496px;top:412.8px;font-size:18.6px">MASTER slave door opening time</div>
  <div class="a blue" style="left:818px;top:412.8px;font-size:18.6px">Awair Element (19431) Humidity</div>
  <div class="a blue" style="left:1133px;top:412.8px;font-size:18.6px">Awair Element (19431) Temperature</div>
  <div class="a blue" style="left:1479px;top:412.8px;font-size:18.6px">slave door contact</div>
  <div class="a blue" style="left:1679px;top:412.8px;font-size:18.6px">Small garage door</div>
  <div class="a blue" style="left:362px;top:447.0px;font-size:18.6px">Life360 with States</div>
  <div class="a blue" style="left:568px;top:447.0px;font-size:18.6px">Tado (Connect)</div>
  <div class="a blue" style="left:743px;top:447.0px;font-size:18.6px">front room</div>
  <div class="a" style="left:352px;top:480px;width:1535px;height:1px;background:#cfcfcf"></div>
  <div class="a blue2" style="left:353px;top:504.5px;font-size:15.7px">app:1300</div>
  <div class="a" style="left:473px;top:501.5px;font-size:18.4px;color:#222">2022-10-18 08:39:50.072 PM</div>
  <div class="a info" style="left:726px;top:499.7px">info</div>
  <div class="a" style="left:797px;top:501.5px;font-size:18.4px;color:#222">Action: Wait for event: &ndash;&gt; elapsed time: 0:01:00</div>
  <div class="a blue2" style="left:353px;top:535.9px;font-size:15.7px">app:1300</div>
  <div class="a" style="left:473px;top:532.9px;font-size:18.4px;color:#222">2022-10-18 08:39:50.064 PM</div>
  <div class="a info" style="left:726px;top:531.1px">info</div>
  <div class="a" style="left:797px;top:532.9px;font-size:18.4px;color:#222">Action: Set magic button pressed to 5 +1</div>
  <div class="a blue2" style="left:353px;top:567.2px;font-size:15.7px">app:1300</div>
  <div class="a" style="left:473px;top:564.3px;font-size:18.4px;color:#222">2022-10-18 08:39:49.976 PM</div>
  <div class="a info" style="left:726px;top:562.4px">info</div>
  <div class="a" style="left:797px;top:564.3px;font-size:18.4px;color:#222">Triggered</div>
  <div class="a blue2" style="left:353px;top:598.6px;font-size:15.7px">app:1300</div>
  <div class="a" style="left:473px;top:595.6px;font-size:18.4px;color:#222">2022-10-18 08:39:49.967 PM</div>
  <div class="a info" style="left:726px;top:593.8px">info</div>
  <div class="a" style="left:797px;top:595.6px;font-size:18.4px;color:#222">Event: magic button pushed 1</div>
  <div class="a blue2" style="left:353px;top:629.9px;font-size:15.7px">app:1300</div>
  <div class="a" style="left:473px;top:627.0px;font-size:18.4px;color:#222">2022-10-18 08:39:18.346 PM</div>
  <div class="a info" style="left:726px;top:625.1px">info</div>
  <div class="a" style="left:797px;top:627.0px;font-size:18.4px;color:#222">Action: Wait for event: &ndash;&gt; elapsed time: 0:01:00</div>
  <div class="a blue2" style="left:353px;top:661.3px;font-size:15.7px">app:1300</div>
  <div class="a" style="left:473px;top:658.3px;font-size:18.4px;color:#222">2022-10-18 08:39:18.340 PM</div>
  <div class="a info" style="left:726px;top:656.5px">info</div>
  <div class="a" style="left:797px;top:658.3px;font-size:18.4px;color:#222">Action: Set magic button pressed to 5 +1</div>
  <div class="a blue2" style="left:353px;top:692.7px;font-size:15.7px">app:1300</div>
  <div class="a" style="left:473px;top:689.7px;font-size:18.4px;color:#222">2022-10-18 08:39:18.226 PM</div>
  <div class="a info" style="left:726px;top:687.9px">info</div>
  <div class="a" style="left:797px;top:689.7px;font-size:18.4px;color:#222">Triggered</div>
  <div class="a blue2" style="left:353px;top:724.0px;font-size:15.7px">app:1300</div>
  <div class="a" style="left:473px;top:721.1px;font-size:18.4px;color:#222">2022-10-18 08:39:18.218 PM</div>
  <div class="a info" style="left:726px;top:719.2px">info</div>
  <div class="a" style="left:797px;top:721.1px;font-size:18.4px;color:#222">Event: magic button pushed 1</div>
  <div class="a blue2" style="left:353px;top:755.4px;font-size:15.7px">app:1300</div>
  <div class="a" style="left:473px;top:752.4px;font-size:18.4px;color:#222">2022-10-18 08:38:39.488 PM</div>
  <div class="a info" style="left:726px;top:750.6px">info</div>
  <div class="a" style="left:797px;top:752.4px;font-size:18.4px;color:#222">Action: Wait for event: &ndash;&gt; elapsed time: 0:01:00</div>
  <div class="a blue2" style="left:353px;top:786.7px;font-size:15.7px">app:1300</div>
  <div class="a" style="left:473px;top:783.8px;font-size:18.4px;color:#222">2022-10-18 08:38:39.482 PM</div>
  <div class="a info" style="left:726px;top:781.9px">info</div>
  <div class="a" style="left:797px;top:783.8px;font-size:18.4px;color:#222">Action: Set magic button pressed to 5 +1</div>
  <div class="a blue2" style="left:353px;top:818.1px;font-size:15.7px">app:1300</div>
  <div class="a" style="left:473px;top:815.1px;font-size:18.4px;color:#222">2022-10-18 08:38:39.392 PM</div>
  <div class="a info" style="left:726px;top:813.3px">info</div>
  <div class="a" style="left:797px;top:815.1px;font-size:18.4px;color:#222">Triggered</div>
  <div class="a blue2" style="left:353px;top:849.5px;font-size:15.7px">app:1300</div>
  <div class="a" style="left:473px;top:846.5px;font-size:18.4px;color:#222">2022-10-18 08:38:39.382 PM</div>
  <div class="a info" style="left:726px;top:844.7px">info</div>
  <div class="a" style="left:797px;top:846.5px;font-size:18.4px;color:#222">Event: magic button pushed 1</div>
  <!--PAGE-->
  </div>
  <div class="a" style="left:0;top:0;width:1920px;height:1076px;border-radius:11px;border:1px solid rgba(140,130,140,.55);pointer-events:none"></div>
</div>
</body></html>
